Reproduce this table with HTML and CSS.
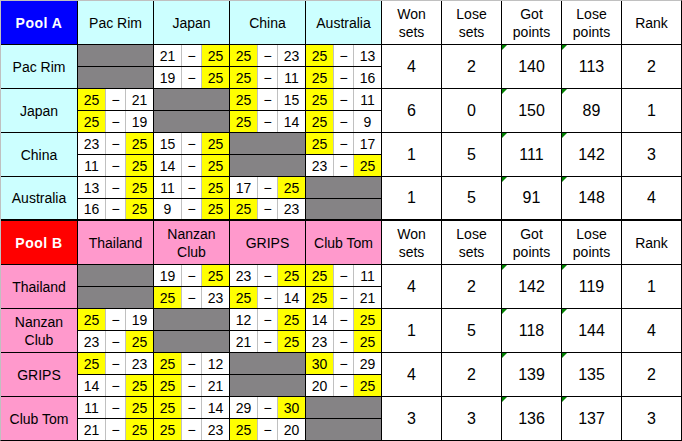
FILE: index.html
```html
<!DOCTYPE html>
<html>
<head>
<meta charset="utf-8">
<title>Pools</title>
<link rel="stylesheet" href="styles.css">
</head>
<body>
<div class="sheet">
  <div class="pool pool-a">
    <div class="c pool-title pa">Pool A</div>
    <div class="c ha">Pac Rim</div>
    <div class="c ha">Japan</div>
    <div class="c ha">China</div>
    <div class="c ha">Australia</div>
    <div class="c">Won<br>sets</div>
    <div class="c">Lose<br>sets</div>
    <div class="c">Got<br>points</div>
    <div class="c">Lose<br>points</div>
    <div class="c">Rank</div>

    <div class="c ha span2">Pac Rim</div>
    <div class="x"></div>
    <div class="sc"><span>21</span><span class="d">−</span><span class="w">25</span></div>
    <div class="sc"><span class="w">25</span><span class="d">−</span><span>23</span></div>
    <div class="sc"><span class="w">25</span><span class="d">−</span><span>13</span></div>
    <div class="c st span2">4</div>
    <div class="c st span2">2</div>
    <div class="c st span2 tri">140</div>
    <div class="c st span2 tri">113</div>
    <div class="c st span2">2</div>
    <div class="x"></div>
    <div class="sc"><span>19</span><span class="d">−</span><span class="w">25</span></div>
    <div class="sc"><span class="w">25</span><span class="d">−</span><span>11</span></div>
    <div class="sc"><span class="w">25</span><span class="d">−</span><span>16</span></div>

    <div class="c ha span2">Japan</div>
    <div class="sc"><span class="w">25</span><span class="d">−</span><span>21</span></div>
    <div class="x"></div>
    <div class="sc"><span class="w">25</span><span class="d">−</span><span>15</span></div>
    <div class="sc"><span class="w">25</span><span class="d">−</span><span>11</span></div>
    <div class="c st span2">6</div>
    <div class="c st span2">0</div>
    <div class="c st span2 tri">150</div>
    <div class="c st span2 tri">89</div>
    <div class="c st span2">1</div>
    <div class="sc"><span class="w">25</span><span class="d">−</span><span>19</span></div>
    <div class="x"></div>
    <div class="sc"><span class="w">25</span><span class="d">−</span><span>14</span></div>
    <div class="sc"><span class="w">25</span><span class="d">−</span><span>9</span></div>

    <div class="c ha span2">China</div>
    <div class="sc"><span>23</span><span class="d">−</span><span class="w">25</span></div>
    <div class="sc"><span>15</span><span class="d">−</span><span class="w">25</span></div>
    <div class="x"></div>
    <div class="sc"><span class="w">25</span><span class="d">−</span><span>17</span></div>
    <div class="c st span2">1</div>
    <div class="c st span2">5</div>
    <div class="c st span2 tri">111</div>
    <div class="c st span2 tri">142</div>
    <div class="c st span2">3</div>
    <div class="sc"><span>11</span><span class="d">−</span><span class="w">25</span></div>
    <div class="sc"><span>14</span><span class="d">−</span><span class="w">25</span></div>
    <div class="x"></div>
    <div class="sc"><span>23</span><span class="d">−</span><span class="w">25</span></div>

    <div class="c ha span2">Australia</div>
    <div class="sc"><span>13</span><span class="d">−</span><span class="w">25</span></div>
    <div class="sc"><span>11</span><span class="d">−</span><span class="w">25</span></div>
    <div class="sc"><span>17</span><span class="d">−</span><span class="w">25</span></div>
    <div class="x"></div>
    <div class="c st span2">1</div>
    <div class="c st span2">5</div>
    <div class="c st span2 tri">91</div>
    <div class="c st span2 tri">148</div>
    <div class="c st span2">4</div>
    <div class="sc"><span>16</span><span class="d">−</span><span class="w">25</span></div>
    <div class="sc"><span>9</span><span class="d">−</span><span class="w">25</span></div>
    <div class="sc"><span class="w">25</span><span class="d">−</span><span>23</span></div>
    <div class="x"></div>
  </div>

  <div class="pool pool-b">
    <div class="c pool-title pb">Pool B</div>
    <div class="c hb">Thailand</div>
    <div class="c hb">Nanzan<br>Club</div>
    <div class="c hb">GRIPS</div>
    <div class="c hb">Club Tom</div>
    <div class="c">Won<br>sets</div>
    <div class="c">Lose<br>sets</div>
    <div class="c">Got<br>points</div>
    <div class="c">Lose<br>points</div>
    <div class="c">Rank</div>

    <div class="c hb span2">Thailand</div>
    <div class="x"></div>
    <div class="sc"><span>19</span><span class="d">−</span><span class="w">25</span></div>
    <div class="sc"><span>23</span><span class="d">−</span><span class="w">25</span></div>
    <div class="sc"><span class="w">25</span><span class="d">−</span><span>11</span></div>
    <div class="c st span2">4</div>
    <div class="c st span2">2</div>
    <div class="c st span2 tri">142</div>
    <div class="c st span2 tri">119</div>
    <div class="c st span2">1</div>
    <div class="x"></div>
    <div class="sc"><span class="w">25</span><span class="d">−</span><span>23</span></div>
    <div class="sc"><span class="w">25</span><span class="d">−</span><span>14</span></div>
    <div class="sc"><span class="w">25</span><span class="d">−</span><span>21</span></div>

    <div class="c hb span2">Nanzan<br>Club</div>
    <div class="sc"><span class="w">25</span><span class="d">−</span><span>19</span></div>
    <div class="x"></div>
    <div class="sc"><span>12</span><span class="d">−</span><span class="w">25</span></div>
    <div class="sc"><span>14</span><span class="d">−</span><span class="w">25</span></div>
    <div class="c st span2">1</div>
    <div class="c st span2">5</div>
    <div class="c st span2 tri">118</div>
    <div class="c st span2 tri">144</div>
    <div class="c st span2">4</div>
    <div class="sc"><span>23</span><span class="d">−</span><span class="w">25</span></div>
    <div class="x"></div>
    <div class="sc"><span>21</span><span class="d">−</span><span class="w">25</span></div>
    <div class="sc"><span>23</span><span class="d">−</span><span class="w">25</span></div>

    <div class="c hb span2">GRIPS</div>
    <div class="sc"><span class="w">25</span><span class="d">−</span><span>23</span></div>
    <div class="sc"><span class="w">25</span><span class="d">−</span><span>12</span></div>
    <div class="x"></div>
    <div class="sc"><span class="w">30</span><span class="d">−</span><span>29</span></div>
    <div class="c st span2">4</div>
    <div class="c st span2">2</div>
    <div class="c st span2 tri">139</div>
    <div class="c st span2 tri">135</div>
    <div class="c st span2">2</div>
    <div class="sc"><span>14</span><span class="d">−</span><span class="w">25</span></div>
    <div class="sc"><span class="w">25</span><span class="d">−</span><span>21</span></div>
    <div class="x"></div>
    <div class="sc"><span>20</span><span class="d">−</span><span class="w">25</span></div>

    <div class="c hb span2">Club Tom</div>
    <div class="sc"><span>11</span><span class="d">−</span><span class="w">25</span></div>
    <div class="sc"><span class="w">25</span><span class="d">−</span><span>14</span></div>
    <div class="sc"><span>29</span><span class="d">−</span><span class="w">30</span></div>
    <div class="x"></div>
    <div class="c st span2">3</div>
    <div class="c st span2">3</div>
    <div class="c st span2 tri">136</div>
    <div class="c st span2 tri">137</div>
    <div class="c st span2">3</div>
    <div class="sc"><span>21</span><span class="d">−</span><span class="w">25</span></div>
    <div class="sc"><span class="w">25</span><span class="d">−</span><span>23</span></div>
    <div class="sc"><span class="w">25</span><span class="d">−</span><span>20</span></div>
    <div class="x"></div>
  </div>
</div>
</body>
</html>
```
FILE: styles.css
```css
* {
  box-sizing: border-box;
  margin: 0;
  padding: 0;
}

body {
  margin: 0;
  background: #fff;
  color: #000;
  font-family: "Liberation Sans", Arial, sans-serif;
  font-size: 14px;
}

.sheet {
  width: 682px;
  background: #000;
  border-top: 1px solid #c0c0c0;
  border-left: 1px solid #c0c0c0;
  border-right: 1px solid #000;
  border-bottom: 1px solid #000;
}

.pool {
  display: grid;
  grid-template-columns: 76px repeat(4, 75px) repeat(5, 59px);
  grid-template-rows: 43px repeat(8, 21px);
  gap: 1px;
}

.pool-a {
  grid-template-rows: 43px repeat(7, 21px) 20px;
}

.pool-b {
  margin-top: 2px;
}

.c {
  display: flex;
  align-items: center;
  justify-content: center;
  text-align: center;
  background: #fff;
  line-height: 18px;
}

.pool-title {
  color: #fff;
  font-weight: bold;
  letter-spacing: 0.5px;
}

.pa { background: #0000ff; }
.pb { background: #ff0000; }
.ha { background: #ccffff; }
.hb { background: #ff99cc; }

.span2 {
  grid-row: span 2;
}

.st {
  font-size: 16px;
}

.tri {
  position: relative;
}

.tri::before {
  content: "";
  position: absolute;
  top: 0;
  left: 0;
  border-top: 5px solid #008000;
  border-right: 5px solid transparent;
}

.x {
  background: #858385;
}

.sc {
  display: flex;
  gap: 1px;
  background: #c0c0c0;
}

.sc span {
  width: 27px;
  display: flex;
  align-items: center;
  justify-content: center;
  background: #fff;
}

.sc .d {
  width: 19px;
}

.sc .w {
  background: #ffff00;
}
```
